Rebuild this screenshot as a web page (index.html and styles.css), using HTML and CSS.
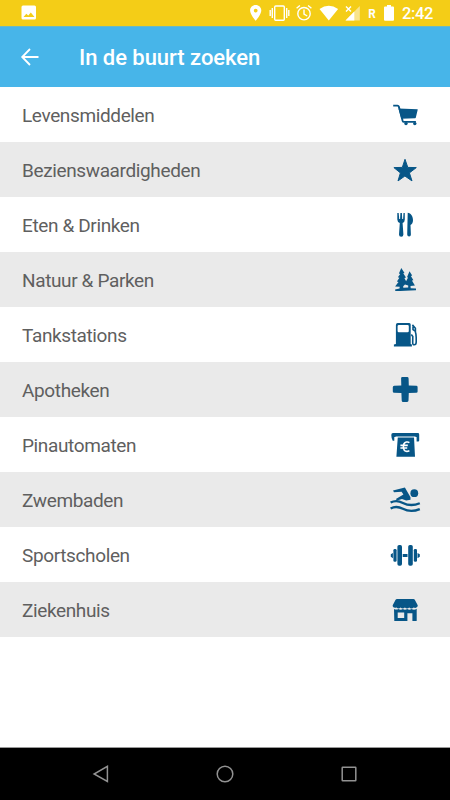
FILE: index.html
```html
<!DOCTYPE html>
<html lang="nl">
<head>
<meta charset="utf-8">
<title>In de buurt zoeken</title>
<link rel="stylesheet" href="styles.css">
</head>
<body>
<div class="status">
  <svg class="photo" width="16" height="16" viewBox="0 0 16 16"><path fill-rule="evenodd" d="M2 .5h11.500q1.500 0 1.500 1.500v11q0 1.500-1.500 1.500H2Q.5 14.500.5 13V2Q.5.500 2 .500zM2.500 12h11L9.800 7.500 7.300 10.500 5.300 8.800z"/></svg>
  <svg class="sys" width="160" height="26" viewBox="0 0 160 26">
    <path fill-rule="evenodd" d="M15.700 5c-3.200 0-5.600 2.400-5.600 5.500 0 4 5.600 10.300 5.600 10.300s5.600-6.300 5.600-10.300C21.300 7.400 18.900 5 15.700 5zm0 3.700a1.900 1.900 0 1 1 0 3.800 1.900 1.900 0 0 1 0-3.800z"/>
    <g class="line"><rect x="34.700" y="6" width="9.600" height="14.200" rx="1"/><path d="M32.300 8v10M30.200 10v6M46.700 8v10M48.800 10v6"/></g>
    <g class="line"><circle cx="64" cy="13.700" r="6.200"/><path d="M64 9.500v4.500l3.200 2M56.600 8.300l3.300-2.800M71.400 8.300l-3.300-2.800"/></g>
    <path d="M79.500 9.100q9.300-6.600 18.600 0L88.800 20.500z"/>
    <path class="faint" d="M119.800 6v14.500h-14.300z"/><path d="M114.300 11.500v9h-8.800z"/>
    <path class="line" d="M106 6.500l5 5M111 6.500l-5 5"/>
    <text class="roam" x="128.300" y="17.700" textLength="7.500" lengthAdjust="spacingAndGlyphs">R</text>
    <path d="M147 5h4v1.600h2q1 0 1 1v12.200q0 1-1 1h-8q-1 0-1-1V7.600q0-1 1-1h2z"/>
  </svg>
  <span class="time">2:42</span>
</div>
<header>
  <svg class="back" width="20" height="20" viewBox="0 0 20 20"><path d="M18.500 10H2.500M10 2L2.200 10 10 18"/></svg>
  <h1>In de buurt zoeken</h1>
</header>
<ul>
  <li><span>Levensmiddelen</span><svg viewBox="0 0 50 55"><path d="M18.500 21.500l19 .7q.3 0 .2.500l-1.800 7.600q-.1.900-.8 1l-13.800.5z"/><path class="stroke" d="M13.200 18.600h4.300q1 0 1.300 1l3.900 14.300q.3 1 1.200 1h12"/><circle cx="26" cy="36.600" r="1.700"/><circle cx="34.800" cy="36.600" r="1.700"/></svg></li>
  <li><span>Bezienswaardigheden</span><svg viewBox="0 0 50 55"><path class="round" d="M25 17.300l2.800 8.100 8.500.2-6.900 5.300 2.600 8-7.100-4.900-6.900 4.900 2.400-8-6.500-5.300 8.400-.2z"/></svg></li>
  <li><span>Eten &amp; Drinken</span><svg viewBox="0 0 50 55"><path d="M17.300 16h1.400l.5 6h.9l.3-6h1.500l.3 6h.9l.4-6h1.300v6.500q0 2.700-2.200 3.400l.8 11.500q0 2.300-2.200 2.300t-2.200-2.300l.8-11.500q-2.500-.8-2.500-3.400z"/><path d="M27.700 15.800c3.300.2 5.300 3.700 5.300 7.400 0 2.300-.9 3.900-2.500 4.700l.4 9.700q0 2-1.800 2t-1.900-2z"/></svg></li>
  <li><span>Natuur &amp; Parken</span><svg viewBox="0 0 50 55"><path d="M21.300 15.900l3.200 5-1.300.4 2.800 4.300-1.600.5 1.700 3.100 2-3.600-1.100-.4 2.500-6 2.700 4.200-1.300.5 2.500 4.300-1.500.4 3 4.900-4.400.4.200 2.400 5.300.2v1.700c-8 .2-13.700.8-20.700.8l-.2-1.600 4.400-1 .2-1.700-4.600-.2 3.400-4.500-1.600-.4 2.500-3.800-1.500-.5 2.300-3.400-1.300-.5zM25 32.500l-1.800 1.700.1 1.500 4.900-.2V33.600z"/></svg></li>
  <li><span>Tankstations</span><svg viewBox="0 0 50 55"><path fill-rule="evenodd" d="M17.700 16h11.500q1.500 0 1.500 1.500v19.600l1.200.4v1.900H13.900v-1.900l2-.4V18q0-2 1.800-2zm1.200 1.900q-1.300 0-1.300 1.400v4.800q0 1.200 1.200 1.200h8.700q1.300 0 1.300-1.200v-4.900q0-1.300-1.200-1.300z"/><path class="thin" d="M32.400 17.900l3 3.300v3.800q.8 2 .8 5.500v4.500q0 2.800-1.900 2.800-1.700 0-1.600-2.200l.1-6.200-1.500-2M33 19.400v3.300l2.500 1.700"/></svg></li>
  <li><span>Apotheken</span><svg viewBox="0 0 50 55"><path d="M22.300 15h4.900q1.300 0 1.400 1.400l.2 7.200 7.500.2q1.300 0 1.300 1.400v4.200q0 1.400-1.300 1.400l-7.500.3-.3 7.400q0 1.400-1.400 1.400h-3.900q-1.500 0-1.500-1.500l-.3-7.300-7.200-.3q-1.400 0-1.400-1.400v-4.200q0-1.500 1.400-1.500l7.100-.2-.2-7.200q0-1.300 1.200-1.300z"/></svg></li>
  <li><span>Pinautomaten</span><svg viewBox="0 0 50 55"><path d="M13 16h24.800q1.400 0 1.400 1.400v6.100q0 1-1 1h-1.600v-4.600l-2.600.1L35 39.700H16.400l1.400-19.700h-3.500v3.700h-1.600q-1.400-2.700-1.400-5.800 0-1.900 1.700-1.900z"/><path class="slot" d="M15.500 20h20"/><path class="euro" d="M29.400 25.600q-1.400-1-3-.5c-4.500 1.300-3.700 9.400.5 9.300q1.300 0 2.500-.8M20.400 28.400h7.400M20.400 31h6.800"/></svg></li>
  <li><span>Zwembaden</span><svg viewBox="0 0 50 55"><circle cx="34.300" cy="21.200" r="3.900"/><path d="M13 18.500L24.900 15.600l5.600 9.700v2.400l-4.300.9-4.200-1.500-5 1.500-1.100-1.500 7.500-4.600-1.800-2.800-7.600.6z"/><path class="wave" d="M10.600 30.600c4-2.200 7.700-2.100 12.300.3s10 3.200 16.900.3M10.600 36.500c4-2.200 7.700-2.100 12.300.3s10 3.200 16.900.3"/></svg></li>
  <li><span>Sportscholen</span><svg viewBox="0 0 50 55"><rect x="17.400" y="18" width="4.600" height="20.800" rx="1.700"/><rect x="28.200" y="18" width="4.600" height="20.800" rx="1.700"/><rect x="13.400" y="22" width="3.200" height="12.700" rx="1.300"/><rect x="33.800" y="22" width="3.200" height="12.700" rx="1.300"/><path d="M12.900 26v5.200l-2.100-1.400v-2.500zM37.500 26v5.200l2.300-1.400v-2.500zM22.700 26.900h4.800V30h-4.800z"/></svg></li>
  <li><span>Ziekenhuis</span><svg viewBox="0 0 50 55"><path d="M17 17h16.500q.8 0 1.300.7l2.900 5.500v1q-1.800 2.700-4 1.300-2.400 2-4.500 0-2.100 2-4.300 0-2.300 2-4.300 0-2.100 2-4 0-2.800.8-3.900-1.300v-1l2.900-5.500q.5-.7 1.400-.7z"/><path fill-rule="evenodd" d="M14 27q2.400 1.200 4.400 0 2.300 1.500 4.500 0 2 1.500 4.300 0 2.300 1.500 4.300 0 2.700 1.500 5.200-.2v11.700q0 .5-.5.500h-3.800v-7.700h-5V39H14.300zm3.700 3.500v5.500h6.500v-5.500z"/></svg></li>
</ul>
<nav>
  <svg width="18" height="18" viewBox="0 0 18 18"><path d="M15.400 1.400v15L2.100 9z"/></svg>
  <svg width="18" height="18" viewBox="0 0 18 18"><circle cx="9" cy="9" r="7.800"/></svg>
  <svg width="18" height="18" viewBox="0 0 18 18"><rect x="2.200" y="2.200" width="13.600" height="13.600" rx=".5"/></svg>
</nav>
</body>
</html>
```
FILE: styles.css
```css
* { box-sizing: border-box; }
body {
  margin: 0;
  height: 800px;
  display: flex;
  flex-direction: column;
  background: #fff;
  font-family: Roboto, "Liberation Sans", sans-serif;
  overflow: hidden;
}
.status {
  height: 26px;
  flex: none;
  display: flex;
  align-items: center;
  padding-left: 20.5px;
  background: #f4cd17;
  color: #fff;
}
.status svg { fill: #fff; }
.sys { margin-left: 203.5px; }
.status .line { fill: none; stroke: #fff; stroke-width: 1.4; }
.status .faint { fill: #f9e48b; }
.roam { font-size: 12px; font-weight: 700; }
.time { margin: 2px 0 0 2px; font-size: 16.5px; font-weight: 500; line-height: 24px; letter-spacing: -0.4px; }
header {
  height: 61px;
  flex: none;
  display: flex;
  align-items: center;
  padding-left: 20px;
  background: #47b5e9;
  border-top: 1px solid #6db9bd;
  color: #fff;
}
.back { fill: none; stroke: #fff; stroke-width: 1.8; }
h1 { margin: 1px 0 0 39px; font-size: 22px; line-height: 30px; font-weight: 500; letter-spacing: -0.04px; }
ul { margin: 0; padding: 0; list-style: none; flex: 1; }
li {
  height: 55px;
  display: flex;
  align-items: center;
  justify-content: space-between;
  padding: 0 20px 0 22px;
  color: #5f5f5f;
  font-size: 19px;
  letter-spacing: -0.37px;
}
li:nth-child(even) { background: #eaeaea; }
li span { margin-top: 2px; }
li svg { width: 50px; height: 55px; fill: #075687; }
li .stroke, li .thin, li .wave, li .slot { fill: none; stroke: #075687; stroke-width: 1.9; }
li .thin { stroke-width: 1.6; }
li .round { stroke: #075687; stroke-width: 1; stroke-linejoin: round; }
li .wave { stroke-width: 2.3; }
li .slot { stroke: #fff; stroke-width: 1; }
li .euro { fill: none; stroke: #fff; stroke-width: 1.6; }
nav {
  height: 53px;
  flex: none;
  display: flex;
  align-items: center;
  justify-content: space-between;
  padding: 0 92px;
  background: #000;
  border-top: 1px solid #999;
}
nav svg { fill: none; stroke: #929292; stroke-width: 1.5; }
```
